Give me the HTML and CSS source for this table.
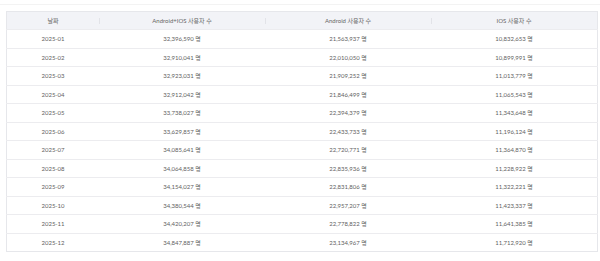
FILE: index.html
```html
<!DOCTYPE html>
<html lang="ko">
<head>
<meta charset="utf-8">
<link rel="stylesheet" href="styles.css">
</head>
<body>
<div class="topline"></div>
<div class="wrap">
<table class="stats">
<thead>
<tr><th class="c-date">날짜</th><th>Android+IOS 사용자 수</th><th>Android 사용자 수</th><th>IOS 사용자 수</th></tr>
</thead>
<tbody>
<tr><td>2025-01</td><td>32,396,590 명</td><td>21,563,937 명</td><td>10,832,653 명</td></tr>
<tr><td>2025-02</td><td>32,910,041 명</td><td>22,010,050 명</td><td>10,899,991 명</td></tr>
<tr><td>2025-03</td><td>32,923,031 명</td><td>21,909,252 명</td><td>11,013,779 명</td></tr>
<tr><td>2025-04</td><td>32,912,042 명</td><td>21,846,499 명</td><td>11,065,543 명</td></tr>
<tr><td>2025-05</td><td>33,738,027 명</td><td>22,394,379 명</td><td>11,343,648 명</td></tr>
<tr><td>2025-06</td><td>33,629,857 명</td><td>22,433,733 명</td><td>11,196,124 명</td></tr>
<tr><td>2025-07</td><td>34,085,641 명</td><td>22,720,771 명</td><td>11,364,870 명</td></tr>
<tr><td>2025-08</td><td>34,064,858 명</td><td>22,835,936 명</td><td>11,228,922 명</td></tr>
<tr><td>2025-09</td><td>34,154,027 명</td><td>22,831,806 명</td><td>11,322,221 명</td></tr>
<tr><td>2025-10</td><td>34,380,544 명</td><td>22,957,207 명</td><td>11,423,337 명</td></tr>
<tr><td>2025-11</td><td>34,420,207 명</td><td>22,778,822 명</td><td>11,641,385 명</td></tr>
<tr><td>2025-12</td><td>34,847,887 명</td><td>23,134,967 명</td><td>11,712,920 명</td></tr>
</tbody>
</table>
</div>
</body>
</html>
```

FILE: styles.css
```css
html, body {
  margin: 0;
  padding: 0;
  background: #ffffff;
}
body {
  font-family: Lato, "Noto Sans CJK KR", sans-serif;
  font-size: 6px;
  color: #5a5a5a;
}
.topline {
  margin-top: 4px;
  height: 1px;
  background: #f3f3f3;
}
.wrap {
  padding: 6px 5px 0 6px;
}
.stats {
  width: 589px;
  border-collapse: collapse;
  table-layout: fixed;
  border: 1px solid #e6e7eb;
}
.stats th {
  height: 17px;
  background: #f2f3f7;
  font-weight: normal;
  color: #666;
  text-align: center;
  position: relative;
  padding: 0;
  width: 166px;
}
.stats th.c-date {
  width: 92px;
}
.stats th + th::before {
  content: "";
  position: absolute;
  left: 0;
  top: 6px;
  height: 6px;
  width: 1px;
  background: #e2e3e8;
}
.stats td {
  height: 17.5px;
  padding: 0;
  text-align: center;
  border-top: 1px solid #ececef;
  color: #5f5f5f;
}
```
